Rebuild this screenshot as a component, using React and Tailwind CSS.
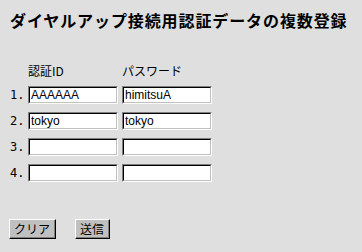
const rows = [
    { no: "1.", id: "AAAAAA", pw: "himitsuA" },
    { no: "2.", id: "tokyo", pw: "tokyo" },
    { no: "3.", id: "", pw: "" },
    { no: "4.", id: "", pw: "" },
];

// Windows-style sunken text box
const Field = ({ value }) => (
    <div className="h-[18px] w-[90px] border-t border-l border-t-[#808080] border-l-[#808080] border-b border-r border-b-white border-r-white">
        <div className="h-full w-full border-t border-l border-t-black border-l-black border-b border-r border-b-[#c0c0c0] border-r-[#c0c0c0] bg-white">
            <input
                readOnly
                defaultValue={value}
                className="block h-full w-full bg-white px-[1px] text-[12px] leading-[14px] text-black outline-none font-['Liberation_Sans',sans-serif]"
            />
        </div>
    </div>
);

// raised push button
const Btn = ({ label, width }) => (
    <button
        type="button"
        className={`${width} h-[20px] border-t border-l border-t-white border-l-white border-b border-r border-b-black border-r-black bg-[#c0c0c0]`}
    >
        <div className="flex h-full w-full items-center justify-center border-b border-r border-b-[#808080] border-r-[#808080] text-[12px] leading-[14px] text-black">
            {label}
        </div>
    </button>
);

const App = () => {
    return (
        <div className="h-[252px] w-[362px] overflow-hidden bg-[#dfdfdf] px-[10px] pt-[10px] font-['Noto_Sans_CJK_JP',sans-serif] text-black">
            {/* Title */}
            <h1 className="whitespace-nowrap text-[16px] font-bold leading-[20px] tracking-[0.9px]">
                ダイヤルアップ接続用認証データの複数登録
            </h1>

            {/* Table */}
            <div className="mt-[34px] grid grid-cols-[14px_90px_90px] gap-x-[4px] gap-y-[8px]">
                <div />
                <div className="h-[14px] text-[12px] leading-[14px]">認証ID</div>
                <div className="h-[14px] text-[12px] leading-[14px]">パスワード</div>
                {rows.map((r) => (
                    <div key={r.no} className="contents">
                        <div className="flex items-center text-[12px] leading-[18px] font-['DejaVu_Sans_Mono',monospace]">{r.no}</div>
                        <Field value={r.id} />
                        <Field value={r.pw} />
                    </div>
                ))}
            </div>

            {/* Buttons */}
            <div className="-ml-px mt-[37px] flex gap-[19px]">
                <Btn label="クリア" width="w-[47px]" />
                <Btn label="送信" width="w-[35px]" />
            </div>
        </div>
    );
};

export default App;
